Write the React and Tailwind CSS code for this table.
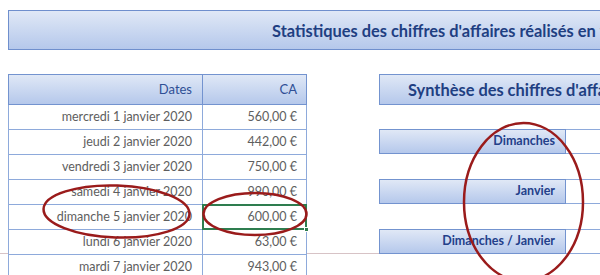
import React from "react";

const rows = [
  ["mercredi 1 janvier 2020", "560,00 €"],
  ["jeudi 2 janvier 2020", "442,00 €"],
  ["vendredi 3 janvier 2020", "750,00 €"],
  ["samedi 4 janvier 2020", "990,00 €"],
  ["dimanche 5 janvier 2020", "600,00 €"],
  ["lundi 6 janvier 2020", "63,00 €"],
  ["mardi 7 janvier 2020", "943,00 €"],
];

const grad = "bg-gradient-to-b from-[#e0e8f6] to-[#b5c8eb]";

function Btn({ label }) {
  return (
    <div className="flex h-[25px] w-[300px]">
      <div className={`w-[187px] shrink-0 h-full ${grad} border border-[#7393cf] flex items-center justify-end pr-[10px] text-[12.5px] font-bold text-[#23408a] whitespace-nowrap`}>
        {label}
      </div>
      <div className="flex-1 h-full border-y border-[#8eaadb] bg-white" />
    </div>
  );
}

export default function App() {
  return (
    <div
      className="relative w-[600px] h-[275px] overflow-hidden bg-white"
      style={{ fontFamily: "Lato, 'Open Sans', sans-serif" }}
    >
      {/* gridline */}
      <div className="absolute left-0 right-0 top-[253px] h-px bg-[#d7c3c6]" />

      <div className="relative pt-[10px] pl-[8px]">
        {/* title banner */}
        <div className={`w-[700px] h-[40px] ${grad} border border-[#6f8fcd] flex items-center pl-[263px] pt-[2px] text-[16.4px] font-bold text-[#1f3f82] whitespace-nowrap`}>
          Statistiques des chiffres d'affaires réalisés en fonction des jours
        </div>

        <div className="flex mt-[24px] w-[900px]">
          {/* table */}
          <div className="w-[299px] shrink-0 bg-white">
            <div className={`flex h-[31px] ${grad} border border-[#7393cf] text-[13px] text-[#2f4f95]`}>
              <div className="w-[194px] shrink-0 border-r border-[#7393cf] flex items-center justify-end pr-[10px]">Dates</div>
              <div className="flex-1 flex items-center justify-end pr-[9px]">CA</div>
            </div>
            {rows.map(([d, v], i) => (
              <div key={i} className="flex h-[25px] border-x border-b border-[#8eaadb] text-[12.5px] text-[#5e5e5e]">
                <div className="w-[194px] shrink-0 border-r border-[#8eaadb] flex items-center justify-end pr-[10px] whitespace-nowrap">{d}</div>
                <div className="relative flex-1 flex items-center justify-end pr-[9px] whitespace-nowrap">
                  {v}
                  {i === 4 && (
                    <>
                      <div className="absolute -left-px -top-px -right-px -bottom-px border-2 border-[#2e7d4f]" />
                      <div className="absolute -right-[3px] -bottom-[3px] w-[5px] h-[5px] bg-[#2e7d4f] border border-white" />
                    </>
                  )}
                </div>
              </div>
            ))}
          </div>

          {/* right panel */}
          <div className="ml-[72px] shrink-0 flex flex-col">
            <div className={`w-[300px] h-[31px] ${grad} border border-[#7393cf] flex items-center pl-[28px] pt-px text-[16.4px] font-bold text-[#1f3f82] whitespace-nowrap`}>
              Synthèse des chiffres d'affaires
            </div>
            <div className="mt-[24px] flex flex-col gap-[25px]">
              <Btn label="Dimanches" />
              <Btn label="Janvier" />
              <Btn label="Dimanches / Janvier" />
            </div>
          </div>
        </div>
      </div>

      {/* annotations */}
      <svg className="absolute inset-0 pointer-events-none" width="600" height="275" viewBox="0 0 600 275">
        <ellipse cx="116.5" cy="211.5" rx="73" ry="26" fill="none" stroke="#9a1b1b" strokeWidth="2.5" transform="rotate(2 116.5 211.5)" />
        <ellipse cx="255" cy="214" rx="51.5" ry="21" fill="none" stroke="#9a1b1b" strokeWidth="2.5" />
        <ellipse cx="523.5" cy="202" rx="59.5" ry="79" fill="none" stroke="#9a1b1b" strokeWidth="2.5" />
      </svg>
    </div>
  );
}
